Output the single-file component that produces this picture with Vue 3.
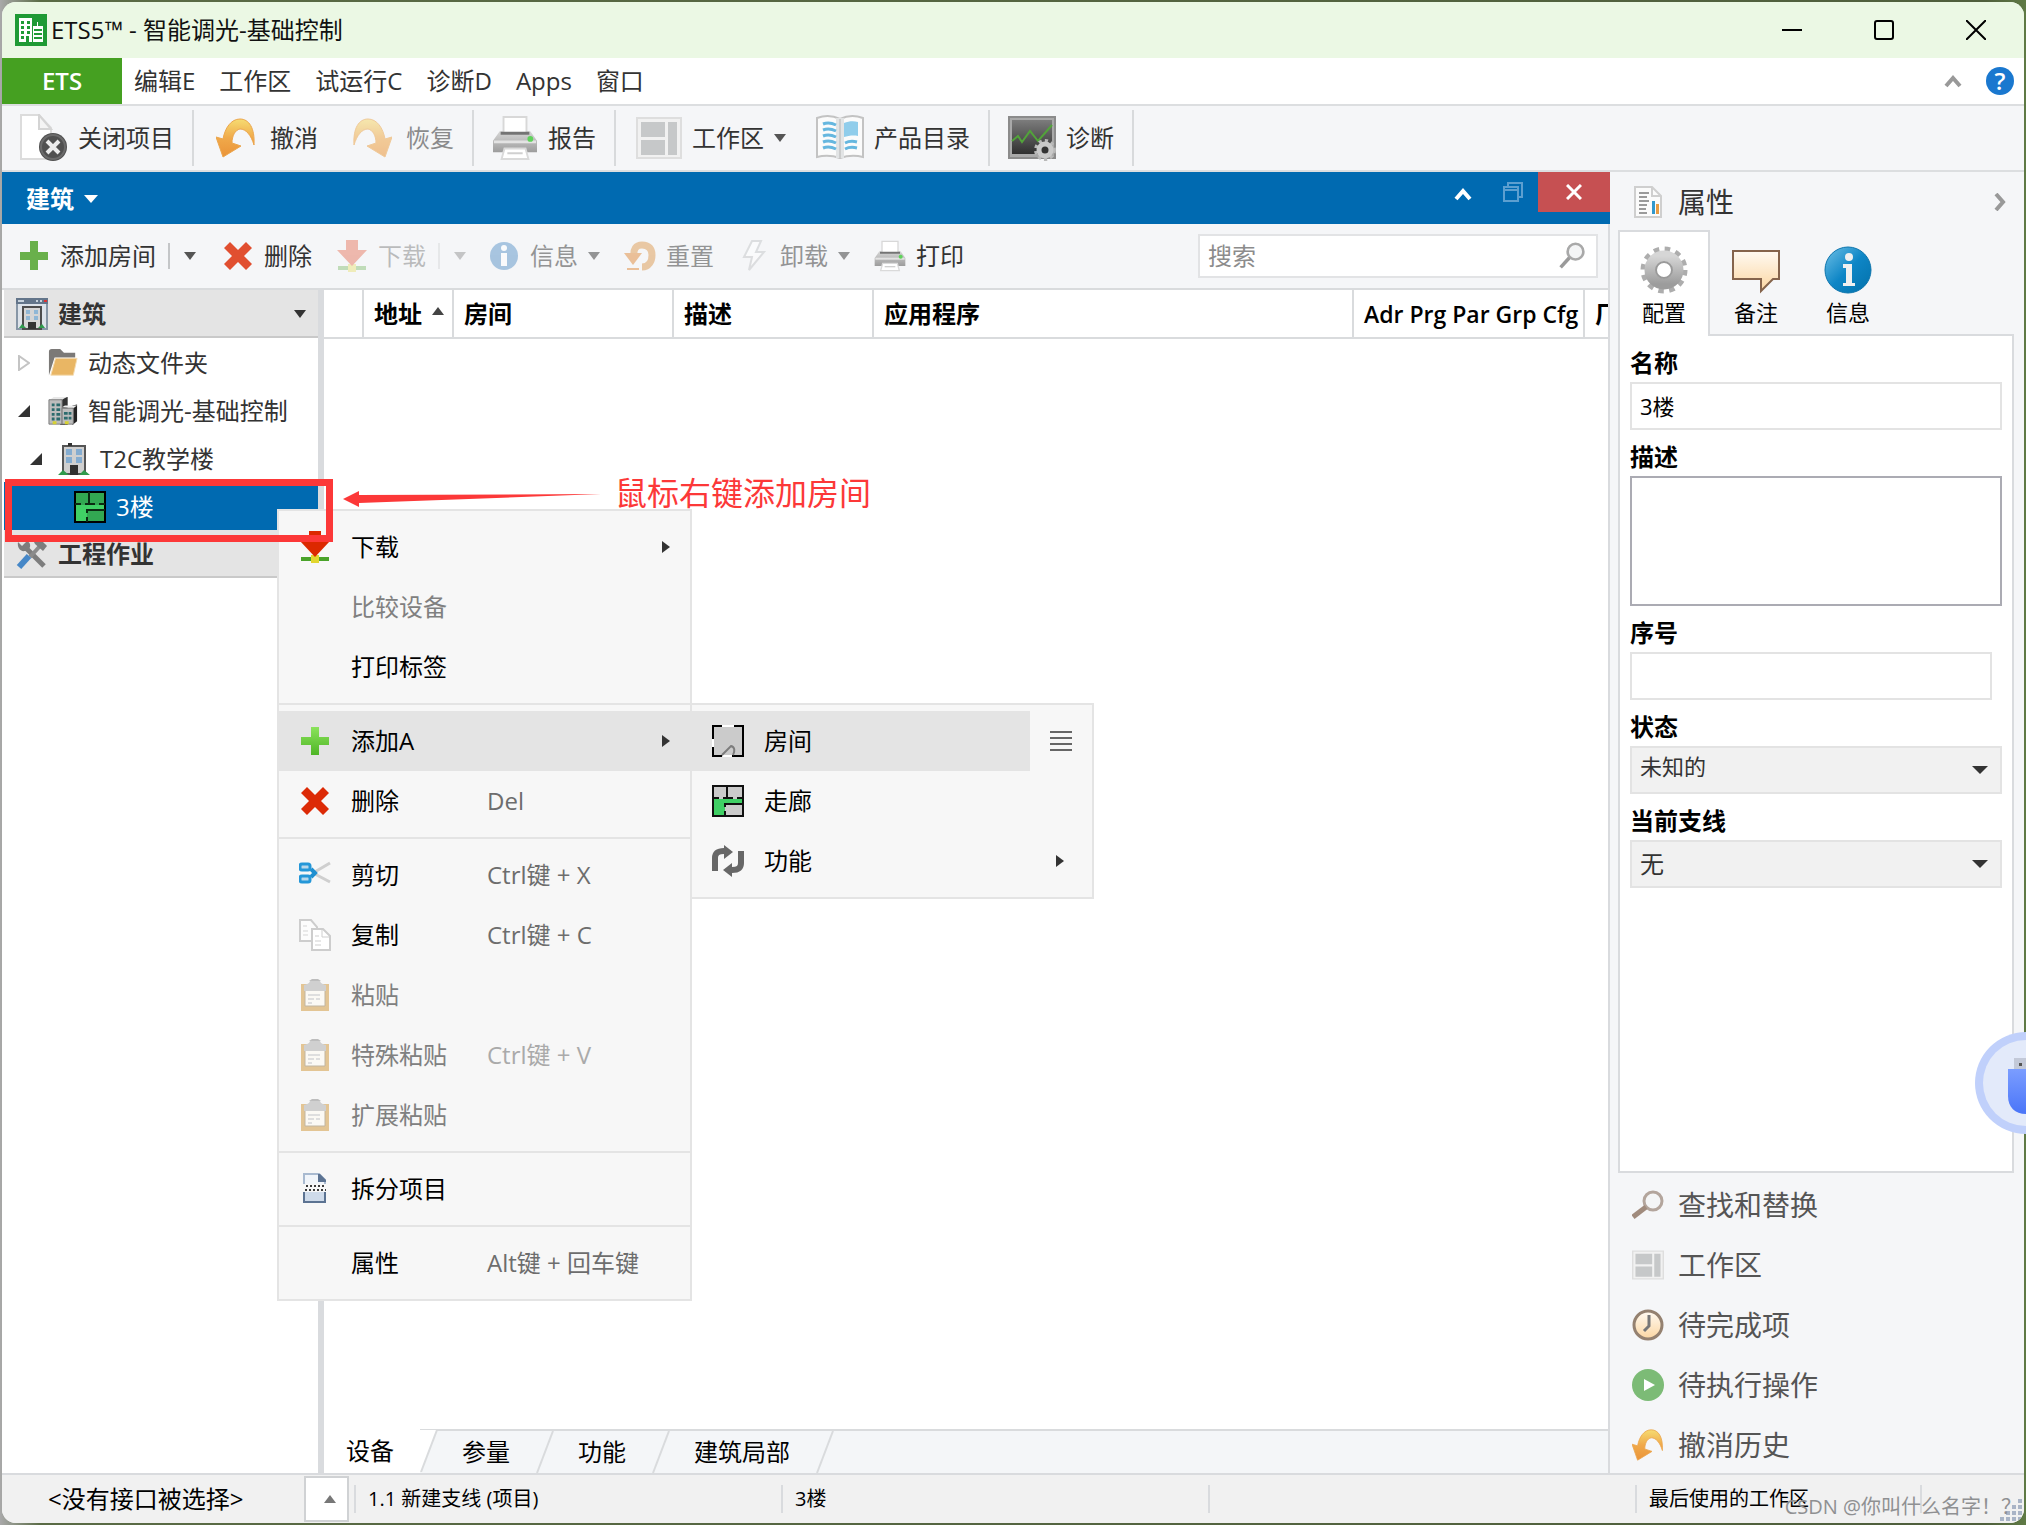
<script setup>
import { ref } from 'vue'

const menus = ['编辑E', '工作区', '试运行C', '诊断D', 'Apps', '窗口']

const name = ref('3楼')
const description = ref('')
const number = ref('')
const state = ref('未知的')
const line = ref('无')
const search = ref('')

const contextMenu = [
    [
        { label: '下载', icon: 'download', arrow: true },
        { label: '比较设备', disabled: true },
        { label: '打印标签' }
    ],
    [
        { label: '添加A', icon: 'plus', arrow: true, active: true },
        { label: '删除', icon: 'cross', keys: 'Del' }
    ],
    [
        { label: '剪切', icon: 'cut', keys: 'Ctrl键 + X' },
        { label: '复制', icon: 'copy', keys: 'Ctrl键 + C' },
        { label: '粘贴', icon: 'paste', disabled: true },
        { label: '特殊粘贴', icon: 'paste', keys: 'Ctrl键 + V', disabled: true },
        { label: '扩展粘贴', icon: 'paste', disabled: true }
    ],
    [{ label: '拆分项目', icon: 'split' }],
    [{ label: '属性', keys: 'Alt键 + 回车键' }]
]

const sideTabs = [
    { label: '配置', icon: 'gear' },
    { label: '备注', icon: 'comment' },
    { label: '信息', icon: 'info' }
]

const sideLinks = [
    { label: '查找和替换', icon: 'find' },
    { label: '工作区', icon: 'workspace' },
    { label: '待完成项', icon: 'clock' },
    { label: '待执行操作', icon: 'play' },
    { label: '撤消历史', icon: 'undo' }
]

const viewTabs = ['设备', '参量', '功能', '建筑局部']
</script>

<template>
    <!-- icon sprite -->
    <svg class="sprite" aria-hidden="true">
        <defs>
            <linearGradient id="g-orange" x1="0" y1="0" x2="0" y2="1">
                <stop offset="0" stop-color="#f6dc72" />
                <stop offset="0.5" stop-color="#f0a94a" />
                <stop offset="1" stop-color="#ea9338" />
            </linearGradient>
            <linearGradient id="g-green" x1="0" y1="0" x2="0" y2="1">
                <stop offset="0" stop-color="#8be35c" />
                <stop offset="1" stop-color="#4fb526" />
            </linearGradient>
            <linearGradient id="g-grey" x1="0" y1="0" x2="0" y2="1">
                <stop offset="0" stop-color="#d6d6d6" />
                <stop offset="1" stop-color="#9c9c9c" />
            </linearGradient>
            <linearGradient id="g-peach" x1="0" y1="0" x2="0" y2="1">
                <stop offset="0" stop-color="#fffaf2" />
                <stop offset="1" stop-color="#fbd6a2" />
            </linearGradient>
            <linearGradient id="g-blue" x1="0" y1="0" x2="1" y2="1">
                <stop offset="0" stop-color="#6fc0e6" />
                <stop offset="0.5" stop-color="#0e86c6" />
                <stop offset="1" stop-color="#0370aa" />
            </linearGradient>
            <linearGradient id="g-dark" x1="0" y1="0" x2="0" y2="1">
                <stop offset="0" stop-color="#7c7c7c" />
                <stop offset="1" stop-color="#303030" />
            </linearGradient>
            <linearGradient id="g-usb" x1="0" y1="0" x2="0" y2="1">
                <stop offset="0" stop-color="#7b9dff" />
                <stop offset="1" stop-color="#4a75f8" />
            </linearGradient>
        </defs>
        <symbol id="logo" viewBox="0 0 32 32">
            <rect width="32" height="32" fill="#1f9a35" />
            <path d="M4 4h13v24H4zM18 12h4V8h1v4h5v16H18z" fill="#fff" />
            <path d="M6 7h3v3H6zM12 7h3v3h-3zM6 12h3v3H6zM12 12h3v3h-3zM6 17h3v3H6zM12 17h3v3h-3zM6 22h3v3H6zM11 22h3v6h-3zM19 15h8v2h-8zM19 19h8v2h-8zM19 23h8v2h-8z" fill="#1f9a35" />
        </symbol>
        <symbol id="close-project" viewBox="0 0 48 48">
            <path d="M1 1h18l12 13v31H1z" fill="#fff" stroke="#dcdcdc" stroke-width="2" />
            <path d="M19 1l12 14H19z" fill="#f4f4f4" stroke="#d4d4d4" stroke-width="2" />
            <circle cx="33" cy="33" r="14" fill="#505050" />
            <circle cx="33" cy="33" r="12" fill="none" stroke="#6b6b6b" stroke-width="2" />
            <path d="M27 27l12 12M39 27L27 39" stroke="#ececec" stroke-width="4" />
        </symbol>
        <symbol id="undo" viewBox="0 0 40 40">
            <path d="M0 19l7 2C9 10 15 1 24 1c9 0 15 9 14 26-3-10-8-16-14-16-5 1-8 7-8 14l9 3L7 39z" fill="url(#g-orange)" stroke="#eba54d" stroke-width="1" />
        </symbol>
        <symbol id="printer" viewBox="0 0 48 46">
            <path d="M12 1h24v18H12z" fill="#fff" stroke="#d8d8d8" stroke-width="2" />
            <path d="M8 16h4v3h24v-3h4l7 10v12H1V26z" fill="url(#g-grey)" />
            <path d="M9 18h30" stroke="#747474" stroke-width="3" />
            <path d="M2 27h44" stroke="#e3e3e3" stroke-width="3" />
            <path d="M13 34h22l3 11H10z" fill="#fff" stroke="#dadada" stroke-width="2" />
            <path d="M16 39h16" stroke="#d0d0d0" stroke-width="2" />
            <circle cx="40" cy="24" r="3" fill="#5fd35b" />
        </symbol>
        <symbol id="workspace" viewBox="0 0 46 42">
            <path d="M1 1h44v40H1z" fill="#f1f1f1" stroke="#dedede" stroke-width="2" />
            <path d="M5 5h24v15H5zM5 23h24v15H5zM32 5h9v33h-9z" fill="#c6c8c9" />
        </symbol>
        <symbol id="book" viewBox="0 0 48 46">
            <path d="M1 3c8-3 17-2 23 1 6-3 15-4 23-1v39c-8-2-17-1-23 1-6-2-15-3-23-1z" fill="#fbfbfb" stroke="#c3c3c3" stroke-width="2" />
            <path d="M20 3h8v40h-8z" fill="#e2e4e5" />
            <path d="M24 4v39" stroke="#b4b4b4" />
            <path d="M7 9c5-2 9-1 13 1M7 15c5-2 9-1 13 1M7 21c5-2 9-1 13 1M7 27c5-2 9-1 13 1M7 33c5-2 9-1 13 1M29 28c4-2 8-2 12-1M29 34c4-2 8-2 12-1" fill="none" stroke="#66b7df" stroke-width="3" />
            <path d="M28 8c5-2 10-2 14-1v14c-5-1-10 0-14 1z" fill="#90cdeb" />
        </symbol>
        <symbol id="diagnose" viewBox="0 0 48 46">
            <path d="M1 2h46v41H1z" fill="#a9a9a9" stroke="#8b8b8b" stroke-width="2" />
            <path d="M4 5h40v34H4z" fill="url(#g-dark)" />
            <path d="M4 26l6-5 4 6 8-11 8 10 14-16" fill="none" stroke="#52a33a" stroke-width="2" />
            <circle cx="37" cy="35" r="9" fill="none" stroke="#b9b9b9" stroke-width="4" stroke-dasharray="3 3" />
            <circle cx="37" cy="35" r="6" fill="#333" stroke="#c9c9c9" stroke-width="5" />
        </symbol>
        <symbol id="plus" viewBox="0 0 32 32">
            <path d="M12 2h8v10h10v8H20v10h-8V20H2v-8h10z" fill="url(#g-green)" />
        </symbol>
        <symbol id="plus-flat" viewBox="0 0 32 32">
            <path d="M12 1h8v11h10v8H20v10h-8V20H2v-8h10z" fill="#69b04b" />
        </symbol>
        <symbol id="cross" viewBox="0 0 32 32">
            <path d="M8 2l8 8 8-8 6 6-8 8 8 8-6 6-8-8-8 8-6-6 8-8-8-8z" fill="#dc2a06" />
        </symbol>
        <symbol id="cross-flat" viewBox="0 0 32 32">
            <path d="M8 2l8 8 8-8 6 6-8 8 8 8-6 6-8-8-8 8-6-6 8-8-8-8z" fill="#e14f30" />
        </symbol>
        <symbol id="download" viewBox="0 0 32 32">
            <path d="M2 26h28v4H2z" fill="#4aa32a" />
            <path d="M12 24h8v8h-8z" fill="#e2d62e" />
            <path d="M10 0h12v10h9L16 26 1 10h9z" fill="#dc2800" />
        </symbol>
        <symbol id="info-flat" viewBox="0 0 32 32">
            <circle cx="16" cy="16" r="14" fill="#5c94c8" />
            <circle cx="16" cy="8" r="3" fill="#fff" />
            <path d="M13 13h6v13h-6z" fill="#fff" />
        </symbol>
        <symbol id="reset" viewBox="0 0 32 32">
            <path d="M10 17c-1-8 2-12 8-12 7 0 10 4 10 10s-3 12-10 12" fill="none" stroke="#dd9950" stroke-width="7" />
            <path d="M0 13h18L9 25z" fill="#e08a3a" />
            <path d="M3 28h12v2H3z" fill="#e08a3a" />
        </symbol>
        <symbol id="bolt" viewBox="0 0 32 32">
            <path d="M14 1h9l-5 11h8L11 30l3-13H6z" fill="#fff" stroke="#c4c6c8" stroke-width="2" />
        </symbol>
        <symbol id="search" viewBox="0 0 32 32">
            <circle cx="20" cy="11" r="9" fill="#f4f5f6" stroke="#a9a9a9" stroke-width="3" />
            <path d="M13 18L3 29" stroke="#9a9a9a" stroke-width="4" />
        </symbol>
        <symbol id="find" viewBox="0 0 32 32">
            <circle cx="21" cy="12" r="9" fill="#f4f5f6" stroke="#b3a59c" stroke-width="3" />
            <path d="M14 18L1 28" stroke="#a08b7d" stroke-width="5" />
        </symbol>
        <symbol id="building-window" viewBox="0 0 32 32">
            <path d="M1 1h30v30H1z" fill="#dde3ea" stroke="#8796a6" stroke-width="2" />
            <path d="M0 0h32v6H0z" fill="#63758a" />
            <path d="M2 2h6v2H2zM20 2h2v2h-2zM24 2h2v2h-2z" fill="#c7d2dc" />
            <path d="M28 2h3v2h-3z" fill="#d33" />
            <path d="M7 9h18v22H7z" fill="#d5d5d5" stroke="#4d4d4d" stroke-width="2" />
            <path d="M10 12h4v4h-4zM18 12h4v4h-4zM10 18h4v4h-4zM18 18h4v4h-4z" fill="#8fb7d6" />
            <path d="M12 24h8v7h-8z" fill="#333" />
            <path d="M3 30l3-4 4 4zM22 30l4-4 3 4z" fill="#2f9b4c" />
        </symbol>
        <symbol id="building" viewBox="0 0 32 32">
            <path d="M5 3h22v28H5z" fill="#cfcfcf" stroke="#555" stroke-width="2" />
            <path d="M10 0h4v3h-4z" fill="#333" />
            <path d="M8 6h6v6H8zM18 6h6v6h-6zM8 14h6v6H8zM18 14h6v6h-6z" fill="#84acd0" />
            <path d="M12 22h8v10h-8z" fill="#303030" />
            <path d="M0 32l5-5 6 5zM21 32l5-5 6 5z" fill="#2f9b4c" />
        </symbol>
        <symbol id="project" viewBox="0 0 32 32">
            <path d="M13 2l8-1v30h-8z" fill="#333" />
            <path d="M26 10l5-1v18l-5 4z" fill="#222" />
            <path d="M2 4l4-3h14l-5 3z" fill="#e8e8e8" />
            <path d="M1 4h14v26H1z" fill="#bdbdbd" stroke="#777" stroke-width="1" />
            <path d="M15 12l3-2h13l-4 3z" fill="#eee" />
            <path d="M15 13h12v17H15z" fill="#bdbdbd" stroke="#777" stroke-width="1" />
            <path d="M4 8h3v3H4zM9 8h4v3H9zM4 13h3v3H4zM9 13h4v3H9zM4 18h3v3H4zM9 18h4v3H9zM4 23h3v3H4zM9 23h4v3H9zM17 17h4v3h-4zM22 17h3v3h-3zM17 22h4v3h-4zM22 22h3v3h-3z" fill="#2c6b6d" />
            <path d="M5 27h4v3H5zM18 27h4v3h-4z" fill="#d7d232" />
        </symbol>
        <symbol id="folder" viewBox="0 0 32 32">
            <path d="M1 29V4c0-2 1-3 3-3h9l4 4h12v5H7z" fill="#7b7977" />
            <path d="M8 11h23l-4 18H3z" fill="#e9b664" stroke="#f4dcb2" stroke-width="1" />
        </symbol>
        <symbol id="floor" viewBox="0 0 32 32">
            <path d="M1 1h30v30H1z" fill="#32a852" stroke="#000" stroke-width="2" />
            <path d="M2 14h28v4H13v12H2z" fill="#40d065" />
            <path d="M15 1v11M1 13h6M11 13h10M25 13h6M31 19H13v3M13 26v5" fill="none" stroke="#0b2a12" stroke-width="2" />
        </symbol>
        <symbol id="tools" viewBox="0 0 32 32">
            <path d="M9 9l19 19" stroke="#7d7d7d" stroke-width="5" />
            <path d="M2 4l4 4 5-5c5 2 4 9-2 10-5 1-8-4-7-9z" fill="#7d7d7d" />
            <path d="M14 19L24 8" stroke="#8b8b8b" stroke-width="4" />
            <path d="M17 2c6-2 9 1 14 6l-4 5-8-7z" fill="#7d7d7d" />
            <path d="M13 18L3 29" stroke="#4687c7" stroke-width="6" />
        </symbol>
        <symbol id="cut" viewBox="0 0 32 32">
            <path d="M14 14L31 4M14 14l17 9" stroke="#cfcfcf" stroke-width="3" />
            <path d="M12 10l4 4-4 4" fill="none" stroke="#1f8fd0" stroke-width="4" />
            <rect x="1" y="5" width="10" height="6" rx="2" fill="#b9d7ea" stroke="#2597d8" stroke-width="3" />
            <rect x="1" y="17" width="10" height="6" rx="2" fill="#b9d7ea" stroke="#2597d8" stroke-width="3" />
        </symbol>
        <symbol id="copy" viewBox="0 0 32 32">
            <path d="M1 1h11l6 7v14H1z" fill="#fcfcfc" stroke="#cdcdcd" stroke-width="2" />
            <path d="M4 7h4M4 12h5M4 16h5" stroke="#d5d5d5" stroke-width="1" />
            <path d="M13 10h11l7 7v14H13z" fill="#fff" stroke="#cdcdcd" stroke-width="2" />
            <path d="M23 11v7h8M16 17h4M16 22h6M16 26h6" fill="none" stroke="#cfcfcf" stroke-width="1" />
        </symbol>
        <symbol id="paste" viewBox="0 0 32 32">
            <path d="M2 5h28v27H2z" fill="#e3c594" />
            <path d="M6 8h20v19H6z" fill="#fbf9f4" stroke="#c1b6a2" stroke-width="1" />
            <path d="M5 12V6c3-1 5-1 6-4h10c1 3 3 3 6 4v6z" fill="#d0d0d0" />
            <path d="M10 2l3-2h6l3 2z" fill="#bdbdbd" />
            <path d="M9 16h12M9 20h6M17 20h4M9 24h4" stroke="#dedede" stroke-width="2" />
        </symbol>
        <symbol id="split" viewBox="0 0 32 32">
            <path d="M5 1h15l6 6v8H5z" fill="#f1f5fa" stroke="#a9bad0" stroke-width="2" />
            <path d="M19 1h2l6 6v2h-8z" fill="#5c7392" />
            <path d="M5 18h21v11H5z" fill="#cfdbea" stroke="#5c7392" stroke-width="2" />
            <path d="M4 11h24v8H4z" fill="#f7f7f7" />
            <path d="M7 13h20M6 17h21" stroke="#3d3d3d" stroke-width="2" stroke-dasharray="2 2" />
        </symbol>
        <symbol id="room" viewBox="0 0 32 32">
            <path d="M1 1h30v30H1z" fill="#cbcbcb" />
            <path d="M10 1h12M1 14v8M11 31h9" stroke="#fff" stroke-width="2" />
            <path d="M10 1H1v13M1 22v9h9M22 1h9v30H20" fill="none" stroke="#000" stroke-width="2" />
            <path d="M10 30l9-9c4 1 4 5 2 9" fill="none" stroke="#7c7c7c" stroke-width="2" />
        </symbol>
        <symbol id="corridor" viewBox="0 0 32 32">
            <path d="M1 1h30v30H1z" fill="#cbcbcb" />
            <path d="M2 14h28v4H13v12H2z" fill="#40d065" />
            <path d="M1 1h30v30H1zM15 1v11M1 13h6M11 13h10M25 13h6M31 19H13v3M13 26v5" fill="none" stroke="#111" stroke-width="2" />
        </symbol>
        <symbol id="function" viewBox="0 0 32 32">
            <path d="M3 26V13c0-5 3-7 9-7" fill="none" stroke="#676767" stroke-width="6" />
            <path d="M12 0l9 7-9 7z" fill="#676767" />
            <path d="M29 6v12c0 5-3 7-9 7" fill="none" stroke="#676767" stroke-width="6" />
            <path d="M20 18l-9 7 9 7z" fill="#676767" />
        </symbol>
        <symbol id="report" viewBox="0 0 28 32">
            <path d="M1 1h17l9 9v21H1z" fill="#fbfbfb" stroke="#cfcfcf" stroke-width="2" />
            <path d="M18 1v9h9" fill="none" stroke="#cfcfcf" stroke-width="2" />
            <path d="M5 7h10M5 11h8M5 15h10M5 19h8M5 23h7M5 27h8" stroke="#9a9a9a" stroke-width="2" />
            <path d="M18 15h3v13h-3z" fill="#3298cc" />
            <path d="M22 18h3v10h-3z" fill="#e79b42" />
        </symbol>
        <symbol id="gear" viewBox="0 0 48 48">
            <circle cx="24" cy="24" r="21" fill="none" stroke="#adadad" stroke-width="5" stroke-dasharray="5.5 5.5" />
            <circle cx="24" cy="24" r="14" fill="none" stroke="url(#g-grey)" stroke-width="11" />
            <circle cx="24" cy="24" r="8" fill="#fff" stroke="#999" stroke-width="2" />
        </symbol>
        <symbol id="comment" viewBox="0 0 48 48">
            <path d="M1 5h46v28h-6L29 45V33H1z" fill="url(#g-peach)" stroke="#85644c" stroke-width="2" />
        </symbol>
        <symbol id="info" viewBox="0 0 48 48">
            <circle cx="24" cy="24" r="23" fill="url(#g-blue)" stroke="#0d75ad" stroke-width="1" />
            <circle cx="25" cy="11" r="4" fill="#f0f0f0" />
            <path d="M19 18h9v19h3v3H19v-3h3V22h-3z" fill="#f0f0f0" />
        </symbol>
        <symbol id="clock" viewBox="0 0 32 32">
            <circle cx="16" cy="16" r="14" fill="url(#g-peach)" stroke="#948170" stroke-width="3" />
            <path d="M17 6v11l-5 5" fill="none" stroke="#777" stroke-width="3" />
        </symbol>
        <symbol id="play" viewBox="0 0 32 32">
            <circle cx="16" cy="16" r="16" fill="#7cbb76" />
            <path d="M12 10l11 6-11 6z" fill="#fff" />
        </symbol>
        <symbol id="down" viewBox="0 0 12 8" preserveAspectRatio="none"><path d="M0 0h12L6 8z" fill="currentColor" /></symbol>
        <symbol id="up" viewBox="0 0 12 8"><path d="M0 8h12L6 0z" fill="currentColor" /></symbol>
        <symbol id="right" viewBox="0 0 8 12"><path d="M0 0v12l8-6z" fill="currentColor" /></symbol>
        <symbol id="caret" viewBox="0 0 18 14"><path d="M2 12l7-8 7 8" fill="none" stroke="currentColor" stroke-width="4" /></symbol>
    </svg>

    <div class="window">
        <header class="title_bar">
            <svg class="logo"><use href="#logo" /></svg>
            <h1>ETS5™ - 智能调光-基础控制</h1>
            <div class="window_buttons">
                <button aria-label="最小化"><svg viewBox="0 0 20 20"><path d="M0 10h20" /></svg></button>
                <button aria-label="最大化"><svg viewBox="0 0 20 20"><rect x="1" y="1" width="18" height="18" rx="2" /></svg></button>
                <button aria-label="关闭"><svg viewBox="0 0 20 20"><path d="M0 0l20 20M20 0L0 20" /></svg></button>
            </div>
        </header>

        <nav class="menu_bar">
            <button class="ets">ETS</button>
            <button v-for="item in menus" :key="item" class="menu">{{ item }}</button>
            <span class="spacer"></span>
            <button class="collapse" aria-label="折叠"><svg class="caret"><use href="#caret" /></svg></button>
            <button class="help" aria-label="帮助">?</button>
        </nav>

        <div class="toolbar">
            <div class="group">
                <button><svg class="ic48"><use href="#close-project" /></svg>关闭项目</button>
            </div>
            <div class="group history">
                <button><svg class="ic40"><use href="#undo" /></svg>撤消</button>
                <button class="redo" disabled><svg class="ic40 flip"><use href="#undo" /></svg>恢复</button>
            </div>
            <div class="group">
                <button><svg class="ic46"><use href="#printer" /></svg>报告</button>
            </div>
            <div class="group">
                <button><svg class="ic46"><use href="#workspace" /></svg>工作区<svg class="down"><use href="#down" /></svg></button>
                <button class="catalog"><svg class="ic48"><use href="#book" /></svg>产品目录</button>
            </div>
            <div class="group">
                <button><svg class="ic48"><use href="#diagnose" /></svg>诊断</button>
            </div>
        </div>

        <div class="content">
            <main class="workspace">
                <div class="panel_title">
                    <button class="panel_name">建筑<svg class="down"><use href="#down" /></svg></button>
                    <button class="pin" aria-label="收起"><svg class="caret"><use href="#caret" /></svg></button>
                    <button class="restore" aria-label="还原">
                        <svg viewBox="0 0 20 20"><path d="M5 4V1h14v14h-3M1 5h14v14H1zM1 8h14" /></svg>
                    </button>
                    <button class="panel_close" aria-label="关闭面板">
                        <svg viewBox="0 0 16 16"><path d="M1 1l14 14M15 1L1 15" /></svg>
                    </button>
                </div>

                <div class="actions">
                    <button class="add"><svg class="ic32"><use href="#plus-flat" /></svg>添加房间</button>
                    <button class="drop" aria-label="更多房间"><svg class="down"><use href="#down" /></svg></button>
                    <button class="remove"><svg class="ic32"><use href="#cross-flat" /></svg>删除</button>
                    <button class="load faded" disabled><svg class="ic32"><use href="#download" /></svg>下载</button>
                    <button class="drop faded" disabled aria-label="更多下载"><svg class="down"><use href="#down" /></svg></button>
                    <button class="about half" disabled><svg class="ic32"><use href="#info-flat" /></svg>信息<svg class="down"><use href="#down" /></svg></button>
                    <button class="reset half" disabled><svg class="ic32"><use href="#reset" /></svg>重置</button>
                    <button class="unload half" disabled><svg class="ic32"><use href="#bolt" /></svg>卸载<svg class="down"><use href="#down" /></svg></button>
                    <button class="print"><svg class="ic32"><use href="#printer" /></svg>打印</button>
                    <label class="search">
                        <input v-model="search" type="text" placeholder="搜索" aria-label="搜索">
                        <svg class="ic28"><use href="#search" /></svg>
                    </label>
                </div>

                <div class="split">
                    <aside class="tree">
                        <h2>
                            <svg class="ic32"><use href="#building-window" /></svg>建筑
                            <svg class="down"><use href="#down" /></svg>
                        </h2>
                        <ul>
                            <li>
                                <svg class="twist" viewBox="0 0 12 16"><path d="M1 1v14l10-7z" fill="#fff" stroke="#c4c4c4" stroke-width="2" /></svg>
                                <svg class="ic30"><use href="#folder" /></svg>动态文件夹
                            </li>
                            <li>
                                <svg class="twist" viewBox="0 0 12 16"><path d="M12 2v12H0z" fill="#333" /></svg>
                                <svg class="ic30"><use href="#project" /></svg>智能调光-基础控制
                            </li>
                            <li class="level2">
                                <svg class="twist" viewBox="0 0 12 16"><path d="M12 2v12H0z" fill="#333" /></svg>
                                <svg class="ic32"><use href="#building" /></svg>T2C教学楼
                            </li>
                            <li class="level3 selected">
                                <svg class="ic32"><use href="#floor" /></svg>3楼
                            </li>
                        </ul>
                        <h2><svg class="ic32"><use href="#tools" /></svg>工程作业</h2>
                    </aside>

                    <section class="grid_area">
                        <table>
                            <colgroup>
                                <col class="c1"><col class="c2"><col class="c3"><col class="c4"><col><col class="c6"><col class="c7">
                            </colgroup>
                            <thead>
                                <tr>
                                    <th></th>
                                    <th>地址<svg class="sort"><use href="#up" /></svg></th>
                                    <th>房间</th>
                                    <th>描述</th>
                                    <th>应用程序</th>
                                    <th class="flags">Adr Prg Par Grp Cfg</th>
                                    <th>厂商</th>
                                </tr>
                            </thead>
                        </table>
                        <div class="view_tabs">
                            <button v-for="(tab, i) in viewTabs" :key="tab" :class="{ current: i === 0 }">
                                {{ tab }}
                                <svg viewBox="0 0 18 42"><path v-if="i === 0" d="M0 0h17L1 42H0z" fill="#fff" /><path d="M17 0L1 42" stroke="#d9dbdd" stroke-width="2" /></svg>
                            </button>
                        </div>
                    </section>
                </div>
            </main>

            <aside class="properties">
                <h2>
                    <svg class="report"><use href="#report" /></svg>属性
                    <svg class="chevron" viewBox="0 0 12 18"><path d="M2 1l7 8-7 8" /></svg>
                </h2>
                <div class="side_tabs">
                    <button v-for="(tab, i) in sideTabs" :key="tab.label" :class="{ current: i === 0 }">
                        <svg class="ic48"><use :href="'#' + tab.icon" /></svg>{{ tab.label }}
                    </button>
                </div>
                <form class="fields">
                    <label for="name">名称</label>
                    <input id="name" v-model="name" type="text">
                    <label for="description">描述</label>
                    <textarea id="description" v-model="description"></textarea>
                    <label for="number">序号</label>
                    <input id="number" v-model="number" class="number" type="text">
                    <label for="state">状态</label>
                    <div class="select">
                        <select id="state" v-model="state" class="state"><option>未知的</option></select>
                        <svg><use href="#down" /></svg>
                    </div>
                    <label for="line">当前支线</label>
                    <div class="select">
                        <select id="line" v-model="line"><option>无</option></select>
                        <svg><use href="#down" /></svg>
                    </div>
                </form>
                <div class="side_links">
                    <button v-for="item in sideLinks" :key="item.label">
                        <svg class="ic32"><use :href="'#' + item.icon" /></svg>{{ item.label }}
                    </button>
                </div>
            </aside>
        </div>

        <footer class="status_bar">
            <span class="interface">&lt;没有接口被选择&gt;</span>
            <button aria-label="选择接口"><svg class="down"><use href="#up" /></svg></button>
            <span class="cell line_cell">1.1 新建支线 (项目)</span>
            <span class="cell floor_cell">3楼</span>
            <span class="cell empty_cell"></span>
            <span class="cell last_cell">最后使用的工作区</span>
            <span class="cell end_cell"></span>
            <svg class="grip" viewBox="0 0 24 24"><path d="M18 2h4M12 8h10M6 14h16M0 20h22" /></svg>
        </footer>
    </div>

    <div class="context_menu" role="menu">
        <div v-for="(group, g) in contextMenu" :key="g" class="menu_group">
            <button v-for="item in group" :key="item.label" role="menuitem" :class="{ active: item.active }" :disabled="item.disabled">
                <svg class="ic32"><use v-if="item.icon" :href="'#' + item.icon" /></svg>
                <span class="label">{{ item.label }}</span>
                <span class="keys">{{ item.keys }}</span>
                <svg v-if="item.arrow" class="arrow"><use href="#right" /></svg>
            </button>
        </div>
    </div>

    <div class="context_menu submenu" role="menu">
        <div class="submenu_row">
            <button class="active" role="menuitem"><svg class="ic32"><use href="#room" /></svg>房间</button>
            <button class="list" aria-label="添加多个"><svg viewBox="0 0 22 22"><path d="M0 2h22M0 8h22M0 14h22M0 20h22" /></svg></button>
        </div>
        <button role="menuitem"><svg class="ic32"><use href="#corridor" /></svg>走廊</button>
        <button role="menuitem"><svg class="ic32"><use href="#function" /></svg>功能<svg class="arrow"><use href="#right" /></svg></button>
    </div>

    <div class="mark_box"></div>
    <svg class="mark_arrow" viewBox="0 0 258 16"><path d="M0 8L16 0v4l242-1L16 12v4z" fill="#fc3838" /></svg>
    <p class="mark_text">鼠标右键添加房间</p>

    <div class="usb">
        <svg viewBox="0 0 51 102">
            <circle cx="51" cy="51" r="51" fill="#c0d0fb" />
            <circle cx="51" cy="51" r="43" fill="#e3eafa" />
            <path d="M39 26h12v12H39z" fill="#c3c9d8" />
            <path d="M44 31h3v3h-3z" fill="#555" />
            <path d="M33 37h18v45c-11 0-18-7-18-18z" fill="url(#g-usb)" />
        </svg>
    </div>
    <p class="watermark">CSDN @你叫什么名字！？</p>
</template>

<style>
body {
    margin: 0;
    background: linear-gradient(to right, #a9a9a9, #5a6b45 2%, #4f5f3c 98%, #5f7a45);
    overflow: hidden;
}
</style>

<style scoped>
.sprite {
    position: absolute;
    width: 0;
    height: 0;
}

.window, .context_menu, .mark_text, .watermark {
    font-family: "Open Sans", "Noto Sans CJK SC", sans-serif;
    font-size: 24px;
    line-height: 32px;
    color: #333;
}

.window {
    box-sizing: border-box;
    height: calc(100vh - 4px);
    margin: 2px;
    display: flex;
    flex-direction: column;
    border-radius: 14px;
    overflow: hidden;
    background: #f5f6f8;
}

button {
    border: 0;
    padding: 0;
    background: none;
    font: inherit;
    color: inherit;
    text-align: left;
    display: flex;
    align-items: center;
    white-space: nowrap;
}

h1, h2, p, ul {
    margin: 0;
    padding: 0;
    font-size: 24px;
}

svg {
    flex: none;
}

.ic48 { width: 48px; height: 48px; }
.ic46 { width: 46px; height: 44px; }
.ic40 { width: 40px; height: 40px; }
.ic32 { width: 32px; height: 32px; }
.ic30 { width: 30px; height: 30px; }
.ic28 { width: 28px; height: 28px; }
.down { width: 12px; height: 8px; }
.caret { width: 18px; height: 14px; }
.flip { transform: scaleX(-1); }

.spacer {
    flex: 1;
}

/* title and menu */
.title_bar {
    height: 56px;
    flex: none;
    display: flex;
    align-items: center;
    padding: 0 2px 0 13px;
    background: #ebf8e4;
}

.logo {
    width: 32px;
    height: 32px;
}

h1 {
    flex: 1;
    padding-left: 4px;
    font-weight: 400;
    color: #111;
}

.window_buttons {
    display: flex;
}

.window_buttons button {
    width: 92px;
    height: 54px;
    justify-content: center;
}

.window_buttons svg {
    width: 20px;
    height: 20px;
    fill: none;
    stroke: #000;
    stroke-width: 2;
}

.menu_bar {
    height: 46px;
    flex: none;
    display: flex;
    gap: 24px;
    background: #fff;
    border-bottom: 2px solid #dcdee0;
}

.ets {
    width: 120px;
    margin-right: -12px;
    justify-content: center;
    background: #45a021;
    color: #fff;
    font-weight: 600;
}

.help {
    width: 28px;
    height: 28px;
    align-self: center;
    justify-content: center;
    margin: 0 10px 0 0;
    border-radius: 50%;
    background: #1a78cf;
    color: #fff;
    font-weight: 600;
}

.collapse {
    color: #999;
}

/* main toolbar */
.toolbar {
    height: 64px;
    flex: none;
    display: flex;
    align-items: center;
    border-bottom: 2px solid #dcdee0;
}

.group {
    height: 56px;
    display: flex;
    padding: 0 18px;
    border-right: 2px solid #d8dadc;
}

.group button {
    gap: 10px;
}

.history {
    padding-left: 22px;
}

.history button {
    gap: 14px;
}

.group .redo {
    margin-left: 34px;
    opacity: 0.55;
}

.group:nth-child(4) {
    padding-left: 20px;
}

.group .catalog {
    margin-left: 30px;
}

.toolbar .down, .drop .down {
    color: #555;
}

/* workspace */
.content {
    flex: 1;
    min-height: 0;
    display: flex;
}

.workspace {
    flex: 1;
    min-width: 0;
    display: flex;
    flex-direction: column;
}

.panel_title {
    height: 52px;
    flex: none;
    display: flex;
    align-items: flex-start;
    background: #006ab1;
    color: #fff;
}

.panel_name {
    height: 54px;
    flex: 1;
    gap: 10px;
    padding-left: 24px;
    font-weight: 700;
}

.panel_name .down {
    width: 14px;
}

.pin, .restore {
    height: 44px;
    width: 50px;
    justify-content: center;
}

.restore {
    height: 40px;
}

.restore svg {
    width: 20px;
    height: 20px;
    fill: none;
    stroke: #5c9fd0;
    stroke-width: 2;
}

.panel_close {
    width: 72px;
    height: 40px;
    justify-content: center;
    background: #c65052;
}

.panel_close svg {
    width: 16px;
    height: 16px;
    stroke: #fff;
    stroke-width: 3;
}

.actions {
    height: 64px;
    flex: none;
    display: flex;
    align-items: center;
    padding: 0 10px 0 16px;
    border-bottom: 2px solid #d9dbdd;
    border-right: 2px solid #d9dbde;
}

.actions button {
    gap: 10px;
}

.actions .drop {
    height: 26px;
    margin-left: 12px;
    padding-left: 14px;
    border-left: 2px solid #c4c6c8;
}

.actions .remove { margin-left: 26px; }
.actions .load { margin-left: 24px; }
.actions .about { margin-left: 22px; }
.actions .reset { margin-left: 24px; }
.actions .unload { margin-left: 24px; }
.actions .print { margin-left: 24px; }
.actions .faded { opacity: 0.3; }
.actions .half { opacity: 0.5; }

.search {
    box-sizing: border-box;
    width: 400px;
    height: 44px;
    margin-left: auto;
    padding: 0 10px 0 8px;
    display: flex;
    align-items: center;
    background: #fff;
    border: 2px solid #e2e3e5;
}

.search input {
    flex: 1;
    min-width: 0;
    border: 0;
    padding: 0;
    outline: 0;
    font: inherit;
}

.search input::placeholder {
    color: #8c8c8c;
}

.split {
    flex: 1;
    min-height: 0;
    display: flex;
    border-bottom: 2px solid #d9dbde;
}

.tree {
    width: 314px;
    flex: none;
    padding-left: 2px;
    border-right: 6px solid #d9dbde;
    background: #fff;
}

.tree h2 {
    box-sizing: border-box;
    height: 48px;
    display: flex;
    align-items: center;
    gap: 10px;
    padding: 2px 12px 0;
    background: #e4e4e4;
    border-bottom: 2px solid #c9c9c9;
    font-weight: 700;
}

.tree h2 .down {
    margin-left: auto;
}

.tree li {
    box-sizing: border-box;
    height: 48px;
    display: flex;
    align-items: center;
    gap: 10px;
    padding: 2px 0 0 14px;
}

.tree .twist {
    width: 12px;
    height: 16px;
    margin-right: 8px;
}

.tree .level2 { padding-left: 26px; }
.tree .level2 .twist { margin-right: 6px; }
.tree .level3 { padding-left: 70px; }

.tree .selected {
    background: #006ab1;
    color: #fff;
}

.grid_area {
    flex: 1;
    min-width: 0;
    display: flex;
    flex-direction: column;
    justify-content: space-between;
    background: #fff;
    border-right: 2px solid #d9dbde;
}

table {
    width: 100%;
    table-layout: fixed;
    border-collapse: collapse;
}

.c1 { width: 39px; }
.c2 { width: 90px; }
.c3 { width: 220px; }
.c4 { width: 200px; }
.c6 { width: 231px; }
.c7 { width: 24px; }

th {
    box-sizing: border-box;
    height: 48px;
    padding: 0 0 0 10px;
    text-align: left;
    font-weight: 700;
    color: #000;
    white-space: nowrap;
    overflow: hidden;
    border-right: 2px solid #d9dbdd;
    border-bottom: 2px solid #d9dbdd;
}

th:last-child {
    border-right: 0;
}

.flags {
    font-weight: 600;
    font-size: 23px;
}

.sort {
    width: 12px;
    height: 8px;
    margin-left: 10px;
    vertical-align: 8px;
    color: #444;
}

.view_tabs {
    height: 42px;
    display: flex;
    background: #f4f6f8;
    border-top: 2px solid #d9dbdd;
    color: #000;
}

.view_tabs button {
    padding-left: 24px;
    gap: 26px;
}

.view_tabs button.current {
    margin-top: -2px;
    padding-left: 22px;
    background: linear-gradient(to left, transparent 18px, #fff 18px);
}

.view_tabs svg {
    width: 18px;
    height: 42px;
}

/* properties */
.properties {
    box-sizing: border-box;
    width: 414px;
    flex: none;
    display: flex;
    flex-direction: column;
    padding: 0 10px 0 8px;
    border-bottom: 2px solid #d9dbde;
}

.properties h2 {
    height: 58px;
    display: flex;
    align-items: center;
    gap: 16px;
    padding: 2px 8px 0 16px;
    box-sizing: border-box;
    font-size: 28px;
    font-weight: 400;
}

.report {
    width: 28px;
    height: 32px;
}

.chevron {
    width: 12px;
    height: 18px;
    margin-left: auto;
    fill: none;
    stroke: #999;
    stroke-width: 4;
}

.side_tabs {
    display: flex;
    height: 104px;
}

.side_tabs button {
    box-sizing: border-box;
    width: 92px;
    flex-direction: column;
    padding-top: 14px;
    border: 2px solid transparent;
    border-bottom: 0;
    font-size: 22px;
    line-height: 36px;
    color: #000;
}

.side_tabs .current {
    position: relative;
    height: 106px;
    background: #fff;
    border-color: #d9dbde;
}

.fields {
    flex: 1;
    display: flex;
    flex-direction: column;
    padding: 0 10px;
    background: #fff;
    border: 2px solid #d9dbde;
    color: #000;
}

.fields label {
    height: 46px;
    line-height: 54px;
    font-weight: 700;
}

.fields input, .fields textarea, .fields select {
    box-sizing: border-box;
    width: 100%;
    height: 48px;
    margin: 0;
    padding: 0 8px 2px;
    border: 2px solid #e3e3e3;
    border-radius: 0;
    background: #fff;
    font: inherit;
    font-size: 22px;
    color: #000;
    resize: none;
    outline: 0;
}

.fields textarea {
    height: 130px;
    border-color: #ababb3;
}

.fields .number {
    width: calc(100% - 10px);
}

.select {
    display: flex;
    position: relative;
}

.fields select {
    appearance: none;
    padding-bottom: 0;
    background: #f1f1f1;
    font-size: 24px;
    color: #333;
}

.fields .state {
    font-size: 22px;
    padding-bottom: 8px;
}

.select svg {
    position: absolute;
    right: 14px;
    top: 20px;
    width: 16px;
    height: 8px;
    color: #333;
}

.side_links button {
    box-sizing: border-box;
    height: 60px;
    gap: 14px;
    padding: 4px 0 0 14px;
    font-size: 28px;
    color: #555;
}

/* status bar */
.status_bar {
    height: 48px;
    flex: none;
    display: flex;
    align-items: center;
    background: #f1f1f1;
    color: #000;
    font-size: 20px;
}

.interface {
    width: 256px;
    padding-left: 46px;
    font-size: 24px;
}

.status_bar button {
    box-sizing: border-box;
    width: 45px;
    height: 46px;
    padding-left: 6px;
    justify-content: center;
    background: #fff;
    border: 2px solid #d0d2d4;
    color: #777;
}

.cell {
    box-sizing: border-box;
    height: 28px;
    line-height: 28px;
    margin-left: 5px;
    padding-left: 12px;
    border-left: 2px solid #d9dbde;
}

.line_cell { width: 422px; }
.floor_cell { width: 422px; }
.empty_cell { flex: 1; }
.last_cell { width: 280px; }
.end_cell { width: 80px; }

.grip {
    width: 24px;
    height: 24px;
    align-self: flex-end;
    stroke: #a9b4c6;
    stroke-width: 4;
    stroke-dasharray: 4 2;
}

/* floating menus */
.context_menu {
    position: absolute;
    left: 277px;
    top: 509px;
    box-sizing: border-box;
    width: 415px;
    padding: 6px 0;
    background: #f7f7f7;
    border: 2px solid #e4e4e4;
    color: #000;
}

.menu_group + .menu_group {
    margin-top: 6px;
    padding-top: 6px;
    border-top: 2px solid #e4e4e4;
}

.context_menu button {
    width: 100%;
    height: 60px;
    gap: 20px;
    padding: 0 20px;
}

.context_menu .active {
    background: #e4e4e4;
}

.context_menu .label {
    width: 116px;
}

.context_menu .keys {
    color: #6d6d6d;
}

.context_menu button:disabled {
    color: #808080;
}

.context_menu button:disabled .keys {
    color: #aaa;
}

.arrow {
    width: 8px;
    height: 12px;
    margin-left: auto;
    color: #333;
}

.submenu {
    left: 690px;
    top: 703px;
    width: 404px;
}

.submenu button {
    padding: 0 28px 0 20px;
}

.submenu_row {
    display: flex;
    margin-left: -2px;
}

.submenu_row .active {
    width: 340px;
    flex: none;
    padding-left: 22px;
}

.submenu_row .list {
    width: 62px;
    padding: 0 20px;
}

.list svg {
    width: 22px;
    height: 22px;
    stroke: #666;
    stroke-width: 2;
}

/* callout drawn over the window */
.mark_box {
    position: absolute;
    left: 5px;
    top: 479px;
    box-sizing: border-box;
    width: 328px;
    height: 63px;
    border: 7px solid #fc3838;
}

.mark_arrow {
    position: absolute;
    left: 343px;
    top: 491px;
    width: 258px;
    height: 16px;
}

.mark_text {
    position: absolute;
    left: 615px;
    top: 473px;
    font-size: 32px;
    line-height: 40px;
    color: #fc3838;
}

.usb {
    position: absolute;
    right: 0;
    top: 1032px;
    height: 102px;
}

.usb svg {
    width: 51px;
    height: 102px;
}

.watermark {
    position: absolute;
    right: 5px;
    bottom: 2px;
    font-size: 20px;
    color: #8f9092;
}
</style>
